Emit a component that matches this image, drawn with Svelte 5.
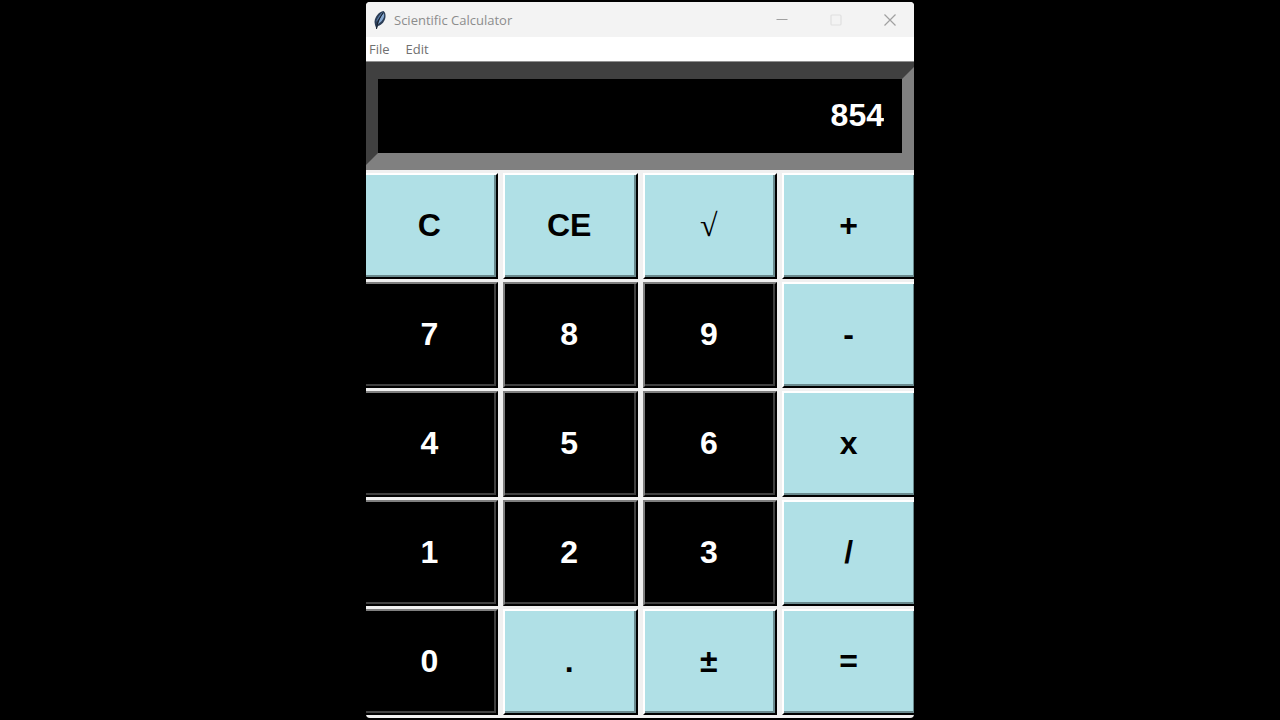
<script>
  const keys = [
    { label: "C", type: "op" },
    { label: "CE", type: "op" },
    { label: "√", type: "op root" },
    { label: "+", type: "op" },
    { label: "7", type: "num" },
    { label: "8", type: "num" },
    { label: "9", type: "num" },
    { label: "-", type: "op" },
    { label: "4", type: "num" },
    { label: "5", type: "num" },
    { label: "6", type: "num" },
    { label: "x", type: "op" },
    { label: "1", type: "num" },
    { label: "2", type: "num" },
    { label: "3", type: "num" },
    { label: "/", type: "op" },
    { label: "0", type: "num" },
    { label: ".", type: "op" },
    { label: "±", type: "op" },
    { label: "=", type: "op" },
  ];

  let display = "854";
  let stored = null;
  let pending = null;
  let fresh = true;

  function calculate(a, b, op) {
    if (op === "+") return a + b;
    if (op === "-") return a - b;
    if (op === "x") return a * b;
    return a / b;
  }

  function press(key) {
    if (/[0-9]/.test(key)) {
      display = fresh ? key : display + key;
      fresh = false;
    } else if (key === ".") {
      if (fresh) display = "0.";
      else if (!display.includes(".")) display += ".";
      fresh = false;
    } else if (key === "C" || key === "CE") {
      display = "0";
      fresh = true;
      if (key === "CE") {
        stored = null;
        pending = null;
      }
    } else if (key === "±") {
      display = String(-display);
    } else if (key === "√") {
      display = String(Math.sqrt(+display));
      fresh = true;
    } else {
      if (pending && !fresh) display = String(calculate(stored, +display, pending));
      stored = +display;
      pending = key === "=" ? null : key;
      fresh = true;
    }
  }
</script>

<main>
  <div class="window">
    <header class="titlebar">
      <svg class="feather" viewBox="0 0 14 20" aria-hidden="true">
        <path d="M10.5 1C6 2 2 6 1.500 12l.5 3 1.500 4 1.500-3c4-1 7-5 7.500-9 .3-3-.5-5-2-6z" fill="#2b3d56" />
        <path d="M10 2C7 4 4 8 3 12c2-2 5-6 7-10z" fill="#5a7ba6" />
        <path d="M10.500 3C8 7 6 10 5 14c3-2 5-4 6-7 .4-1.500.2-3-.5-4z" fill="#86a8d0" />
        <path d="M10 3C7 7 4 12 3.500 19" fill="none" stroke="#17202c" stroke-width="1" />
      </svg>
      <h1>Scientific Calculator</h1>
      <div class="controls">
        <button aria-label="Minimize">
          <svg viewBox="0 0 12 12"><path d="M0.5 5.5h11" /></svg>
        </button>
        <button aria-label="Maximize" disabled>
          <svg viewBox="0 0 12 12"><rect x="1" y="1" width="10" height="10" rx="1" /></svg>
        </button>
        <button aria-label="Close">
          <svg viewBox="0 0 12 12"><path d="M0.5 0.5l11 11M11.5 0.5l-11 11" /></svg>
        </button>
      </div>
    </header>

    <nav class="menu">
      <button>File</button>
      <button>Edit</button>
    </nav>

    <div class="body">
      <input class="display" type="text" aria-label="Result" readonly value={display} />

      <div class="keypad">
        {#each keys as key (key.label)}
          <button class="key {key.type}" on:click={() => press(key.label)}>{key.label}</button>
        {/each}
      </div>
    </div>
  </div>
</main>

<style>
  :global(body) {
    background-color: #000;
  }

  main {
    display: flex;
    justify-content: center;
    padding: 2px 0;
  }

  button,
  input {
    margin: 0;
    padding: 0;
    border: 0;
    border-radius: 0;
    background: none;
    font-family: inherit;
  }

  .window {
    width: 100%;
    max-width: 548px;
    overflow: hidden;
    border-radius: 4px;
    background-color: #f0f0f0;
    font-family: "Open Sans", "Noto Sans", sans-serif;
  }

  .titlebar {
    display: flex;
    align-items: center;
    height: 35px;
    padding-left: 7px;
    background-color: #f3f3f3;
  }

  .feather {
    width: 14px;
    height: 20px;
  }

  h1 {
    flex: 1;
    margin: 0 0 0 7px;
    color: #8c8c8c;
    font-size: 13px;
    font-weight: 400;
  }

  .controls {
    display: flex;
    gap: 6px;
  }

  .controls button {
    display: flex;
    align-items: center;
    justify-content: center;
    width: 48px;
    height: 35px;
  }

  .controls svg {
    width: 12px;
    height: 12px;
    fill: none;
    stroke: #a0a0a0;
    stroke-width: 1.2;
  }

  .controls button:disabled svg {
    stroke: #e0e0e0;
  }

  .menu {
    display: flex;
    gap: 16px;
    height: 24px;
    padding-left: 3px;
    border-bottom: 1px solid #909090;
    background-color: #fff;
  }

  .menu button {
    color: #707070;
    font-size: 13px;
  }

  /* The display and the keys run slightly past both window edges */
  .body {
    overflow: hidden;
  }

  .display {
    display: block;
    box-sizing: border-box;
    width: calc(100% + 10px);
    height: 108px;
    margin: 0 -5px;
    padding: 0 18px 2px;
    border: 17px solid;
    border-color: #404040 #808080 #808080 #404040;
    outline: none;
    background-color: #000;
    color: #fff;
    font: bold 32px "Liberation Sans", Arial, sans-serif;
    text-align: right;
  }

  .keypad {
    display: grid;
    grid-template-columns: repeat(4, 1fr);
    gap: 3px 5px;
    margin: 0 -3px;
    padding: 3px 0;
  }

  .key {
    height: 106px;
    padding: 0 2px 2px 0;
    border: 2px solid;
    font: bold 32px "Liberation Sans", Arial, sans-serif;
  }

  .op {
    border-color: #fff #000 #000 #fff;
    background-color: #b0e0e6;
    box-shadow: inset -2px -2px #6a8a8e;
    color: #000;
  }

  .num {
    border-color: #7f7f7f #000 #000 #7f7f7f;
    background-color: #000;
    box-shadow: inset -2px -2px #404040;
    color: #fff;
  }

  .root {
    font-family: "Liberation Serif", serif;
    font-weight: 400;
  }
</style>
